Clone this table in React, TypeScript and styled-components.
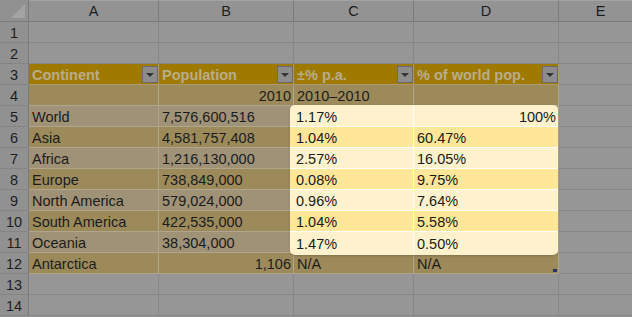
import { Fragment } from "react";
import styled, { createGlobalStyle, css } from "styled-components";

const GlobalStyle = createGlobalStyle`
  html, body {
    margin: 0;
    padding: 0;
    background: #959595;
    overflow: hidden;
  }
  body {
    font-family: "Liberation Sans", Arial, sans-serif;
  }
`;

type Tone = "plain" | "head" | "dark" | "light";

const tones = {
  plain: css`
    background: #969696;
    border-color: #878787;
  `,
  head: css`
    background: #9f7a00;
    border-color: #ad9a66;
    color: #b9ac8c;
    font-weight: bold;
  `,
  dark: css`
    background: #9c8a5a;
    border-color: #afa68c;
  `,
  light: css`
    background: #9f9276;
    border-color: #afa68c;
  `,
};

const Sheet = styled.div`
  position: relative;
  display: grid;
  grid-template-columns: 29px 130px 135px 120px 145px 84px;
  grid-template-rows: 22px;
  grid-auto-rows: 21px;
  width: 632px;
  height: 317px;
  overflow: hidden;
  font-size: 14.5px;
  color: #1c1c1c;
`;

const Corner = styled.div`
  box-sizing: border-box;
  display: flex;
  align-items: flex-end;
  justify-content: flex-end;
  padding: 0 3px 3px 0;
  background: #919191;
  border-right: 1px solid #7b7b7b;
  border-bottom: 1px solid #7b7b7b;
`;

const ColHead = styled.div`
  box-sizing: border-box;
  display: flex;
  align-items: center;
  justify-content: center;
  background: #939393;
  border-right: 1px solid #7b7b7b;
  border-bottom: 1px solid #7b7b7b;
  border-top: 1px solid #a3a3a3;
  color: #1e1e1e;
`;

const RowHead = styled.div`
  box-sizing: border-box;
  display: flex;
  align-items: flex-end;
  justify-content: center;
  line-height: 17px;
  background: #919191;
  border-right: 1px solid #7b7b7b;
  border-bottom: 1px solid #858585;
  color: #1e1e1e;
`;

const Cell = styled.div<{ $tone: Tone; $right?: boolean }>`
  position: relative;
  box-sizing: border-box;
  display: flex;
  align-items: flex-end;
  justify-content: ${(p) => (p.$right ? "flex-end" : "flex-start")};
  padding: 0 2px 0 3px;
  line-height: 17px;
  white-space: nowrap;
  border-right: 1px solid;
  border-bottom: 1px solid;
  ${(p) => tones[p.$tone]}
`;

const HeadText = styled.span`
  flex: 1;
`;

const FilterButton = styled.span`
  box-sizing: border-box;
  width: 16px;
  height: 17px;
  margin: 0 -2px 1px 0;
  display: flex;
  align-items: center;
  justify-content: center;
  border: 1px solid #6b6b6b;
  background: #8d8d8d;

  &::after {
    content: "";
    border-left: 4px solid transparent;
    border-right: 4px solid transparent;
    border-top: 4px solid #333;
    margin-top: 1px;
  }
`;

const Handle = styled.span`
  position: absolute;
  right: 1px;
  bottom: 1px;
  width: 4px;
  height: 3px;
  background: #26346a;
`;

const Spotlight = styled.div`
  position: absolute;
  left: 290px;
  top: 105px;
  width: 268px;
  height: 150px;
  box-sizing: border-box;
  padding-top: 1px;
  border-radius: 5px;
  overflow: hidden;
  background: #fff2cc;
  box-shadow: 0 1px 2px rgba(0, 0, 0, 0.18);
  display: grid;
  grid-template-columns: 124px 144px;
  grid-auto-rows: 21px;
  font-size: 14.5px;
  color: #1a1a1a;
`;

const SpotCell = styled.div<{ $dark: boolean; $last: boolean; $first?: boolean; $right?: boolean }>`
  box-sizing: border-box;
  display: flex;
  align-items: flex-end;
  justify-content: ${(p) => (p.$right ? "flex-end" : "flex-start")};
  padding: 0 2px 0 ${(p) => (p.$first ? "6px" : "3px")};
  line-height: 17px;
  background: ${(p) => (p.$dark ? "#ffe699" : "#fff2cc")};
  border-bottom: ${(p) => (p.$last ? "none" : "1px solid #ffffff")};
  border-right: ${(p) => (p.$first ? "1px solid #ffffff" : "none")};
`;

const data = [
  { name: "World", pop: "7,576,600,516", rate: "1.17%", share: "100%" },
  { name: "Asia", pop: "4,581,757,408", rate: "1.04%", share: "60.47%" },
  { name: "Africa", pop: "1,216,130,000", rate: "2.57%", share: "16.05%" },
  { name: "Europe", pop: "738,849,000", rate: "0.08%", share: "9.75%" },
  { name: "North America", pop: "579,024,000", rate: "0.96%", share: "7.64%" },
  { name: "South America", pop: "422,535,000", rate: "1.04%", share: "5.58%" },
  { name: "Oceania", pop: "38,304,000", rate: "1.47%", share: "0.50%" },
];

const headers = ["Continent", "Population", "±% p.a.", "% of world pop."];

function CornerMark() {
  return (
    <svg width="14" height="14" viewBox="0 0 14 14">
      <polygon points="14,0 14,14 0,14" fill="#a3a3a3" />
    </svg>
  );
}

function RowCells({ r }: { r: number }) {
  const tone: Tone = r % 2 === 0 ? "dark" : "light";

  if (r === 3) {
    return (
      <>
        {headers.map((h) => (
          <Cell key={h} $tone="head">
            <HeadText>{h}</HeadText>
            <FilterButton />
          </Cell>
        ))}
      </>
    );
  }
  if (r === 4) {
    return (
      <>
        <Cell $tone={tone} />
        <Cell $tone={tone} $right>2010</Cell>
        <Cell $tone={tone}>2010–2010</Cell>
        <Cell $tone={tone} />
      </>
    );
  }
  if (r === 12) {
    return (
      <>
        <Cell $tone={tone}>Antarctica</Cell>
        <Cell $tone={tone} $right>1,106</Cell>
        <Cell $tone={tone}>N/A</Cell>
        <Cell $tone={tone}>
          N/A
          <Handle />
        </Cell>
      </>
    );
  }
  if (r >= 5 && r <= 11) {
    const row = data[r - 5];
    // C and D sit under the spotlight
    return (
      <>
        <Cell $tone={tone}>{row.name}</Cell>
        <Cell $tone={tone}>{row.pop}</Cell>
        <Cell $tone={tone} />
        <Cell $tone={tone} />
      </>
    );
  }
  return (
    <>
      <Cell $tone="plain" />
      <Cell $tone="plain" />
      <Cell $tone="plain" />
      <Cell $tone="plain" />
    </>
  );
}

export default function App() {
  const rows = Array.from({ length: 14 }, (_, i) => i + 1);
  return (
    <>
      <GlobalStyle />
      <Sheet>
        <Corner>
          <CornerMark />
        </Corner>
        {["A", "B", "C", "D", "E"].map((c) => (
          <ColHead key={c}>{c}</ColHead>
        ))}
        {rows.map((r) => (
          <Fragment key={r}>
            <RowHead>{r}</RowHead>
            <RowCells r={r} />
            <Cell $tone="plain" />
          </Fragment>
        ))}
        <Spotlight>
          {data.map((row, i) => (
            <Fragment key={row.name}>
              <SpotCell $dark={i % 2 === 1} $last={i === data.length - 1} $first>
                {row.rate}
              </SpotCell>
              <SpotCell $dark={i % 2 === 1} $last={i === data.length - 1} $right={i === 0}>
                {row.share}
              </SpotCell>
            </Fragment>
          ))}
        </Spotlight>
      </Sheet>
    </>
  );
}
